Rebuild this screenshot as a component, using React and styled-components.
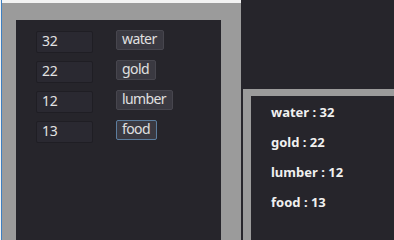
import React from "react";
import styled, { createGlobalStyle } from "styled-components";

const GlobalStyle = createGlobalStyle`
  html, body {
    margin: 0;
    padding: 0;
    height: 100%;
    background: #26252b;
    overflow: hidden;
  }
  body {
    font-family: "Noto Sans", "DejaVu Sans", sans-serif;
  }
  #root {
    height: 100%;
  }
`;

const Screen = styled.div`
  display: grid;
  grid-template-columns: 241px 1fr;
  width: 100%;
  height: 100%;
  min-height: 231px;
  overflow: hidden;
  background: #26252b;
`;

const LeftPane = styled.div`
  box-sizing: border-box;
  border-left: 1px solid #f2f2f2;
  background: #9b9b9b;
`;

const LeftColumn = styled.div`
  height: 100%;
  display: grid;
  grid-template-rows: 3px 1fr;
  border-left: 1px solid #3d7fc2;
`;

const TopStrip = styled.div`
  background: #f2f2f2;
`;

const GrayArea = styled.div`
  display: flex;
  min-height: 0;
  background: #9b9b9b;
  padding: 17px 20px 0 14px;
`;

const Panel = styled.div`
  flex: 1;
  background: #26252b;
  padding: 11px 0 0 20px;
  display: flex;
  flex-direction: column;
`;

const Row = styled.div`
  display: flex;
  align-items: flex-start;
  height: 30px;
`;

const Field = styled.div`
  box-sizing: border-box;
  width: 57px;
  height: 22px;
  background: #2a2931;
  border: 1px solid #1f1e24;
  border-radius: 2px;
  color: #e2e2e2;
  font-size: 14px;
  line-height: 17px;
  letter-spacing: -0.3px;
  padding-left: 5px;
`;

const Button = styled.div`
  box-sizing: border-box;
  height: 20px;
  margin: -1px 0 0 23px;
  padding: 0 6px 0 5px;
  background: #3a3941;
  border: 1px solid ${(p) => (p.focused ? "#5c7d9e" : "#47464e")};
  border-radius: 2px;
  color: #e0e0e0;
  font-size: 14px;
  line-height: 15px;
  letter-spacing: -0.6px;
`;

const RightPane = styled.div`
  display: flex;
  flex-direction: column;
  padding: 89px 0 0 2px;
  background: #26252b;
`;

const Frame = styled.div`
  flex: 1;
  background: #26252b;
  border-top: 7px solid #9b9b9b;
  border-left: 8px solid #9b9b9b;
  padding: 1px 0 0 20px;
`;

const Stat = styled.div`
  height: 30px;
  line-height: 30px;
  color: #f0f0f0;
  font-size: 13px;
  font-weight: bold;
`;

const resources = [
  { name: "water", value: 32 },
  { name: "gold", value: 22 },
  { name: "lumber", value: 12 },
  { name: "food", value: 13 },
];

export default function App() {
  return (
    <>
      <GlobalStyle />
      <Screen>
        <LeftPane>
          <LeftColumn>
            <TopStrip />
            <GrayArea>
              <Panel>
                {resources.map((r) => (
                  <Row key={r.name}>
                    <Field>{r.value}</Field>
                    <Button focused={r.name === "food"}>{r.name}</Button>
                  </Row>
                ))}
              </Panel>
            </GrayArea>
          </LeftColumn>
        </LeftPane>
        <RightPane>
          <Frame>
            {resources.map((r) => (
              <Stat key={r.name}>
                {r.name} : {r.value}
              </Stat>
            ))}
          </Frame>
        </RightPane>
      </Screen>
    </>
  );
}
